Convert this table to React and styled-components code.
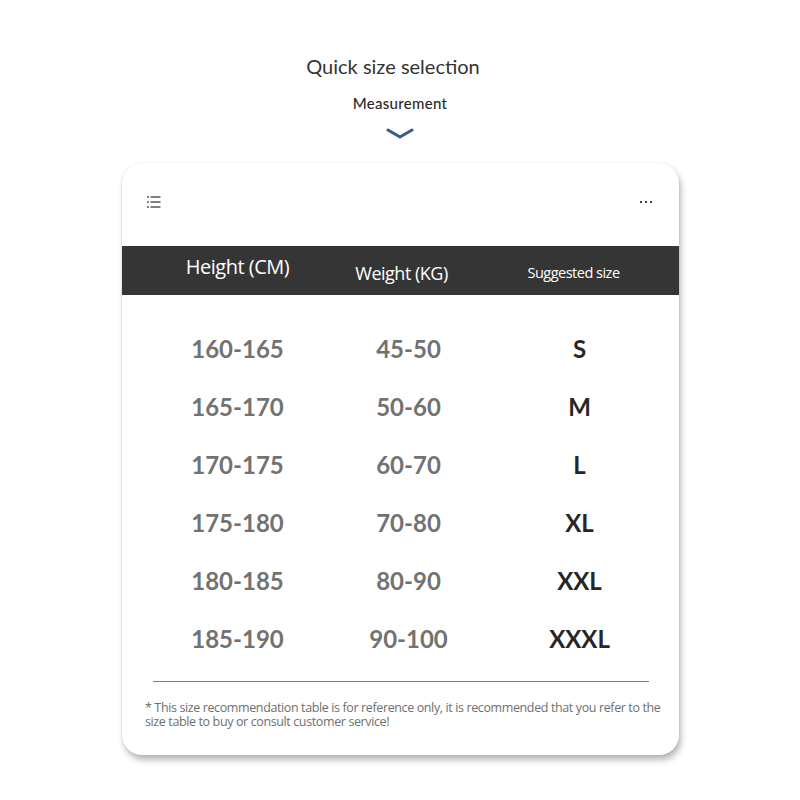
import React from "react";
import styled, { createGlobalStyle } from "styled-components";

const GlobalStyle = createGlobalStyle`
  html, body {
    margin: 0;
    padding: 0;
    background: #ffffff;
  }
  body {
    font-family: "Lato", "Noto Sans", sans-serif;
  }
`;

const Page = styled.div`
  width: 800px;
  height: 800px;
  display: flex;
  flex-direction: column;
  align-items: center;
  padding-top: 52px;
  box-sizing: border-box;
`;

const Title = styled.h1`
  margin: 0;
  font-family: "Lato", sans-serif;
  font-weight: 400;
  font-size: 20px;
  line-height: 28px;
  color: #333333;
  margin-left: -14px;
`;

const Subtitle = styled.div`
  margin-top: 13px;
  font-family: "Lato", sans-serif;
  font-weight: 500;
  font-size: 15px;
  line-height: 20px;
  color: #2a2a2a;
  letter-spacing: 0.3px;
`;

const Chevron = styled.svg`
  margin-top: 15px;
  display: block;
`;

const Card = styled.div`
  margin-top: 23px;
  margin-left: 1px;
  width: 557px;
  height: 592px;
  background: #ffffff;
  border-radius: 20px;
  box-shadow: 0 0 2px rgba(0, 0, 0, 0.12), 2px 5px 6px rgba(0, 0, 0, 0.28);
  overflow: hidden;
  display: flex;
  flex-direction: column;
`;

const Toolbar = styled.div`
  height: 83px;
  display: flex;
  align-items: center;
  justify-content: space-between;
  padding: 0 26px 6px 24px;
  box-sizing: border-box;
`;

const Grid = styled.div`
  display: grid;
  grid-template-columns: 171px 171px 171px;
  padding-left: 30px;
`;

const HeadBand = styled(Grid)`
  height: 49px;
  background: #353535;
  color: #ffffff;
  font-family: "Open Sans", "Noto Sans", sans-serif;
`;

const HeadCell = styled.div`
  display: flex;
  justify-content: center;
  align-items: center;
  font-size: ${(p) => p.$size}px;
  margin-top: ${(p) => p.$offset}px;
  margin-left: ${(p) => p.$shift || 0}px;
  font-weight: 500;
  letter-spacing: -0.5px;
  white-space: nowrap;
`;

const Rows = styled.div`
  padding-top: 24px;
`;

const Row = styled(Grid)`
  height: 58px;
  align-items: center;
`;

const Cell = styled.div`
  text-align: center;
  font-family: "Lato", sans-serif;
  font-weight: 700;
  font-size: 24px;
  color: ${(p) => (p.$dark ? "#262626" : "#727272")};
`;

const Divider = styled.hr`
  margin: 14px 30px 0 31px;
  border: none;
  border-top: 1px solid #7a7a7a;
`;

const Note = styled.p`
  margin: 19px 12px 0 23px;
  font-family: "Open Sans", "Noto Sans", sans-serif;
  font-size: 12.5px;
  line-height: 14px;
  letter-spacing: -0.38px;
  color: #6f6f6f;
`;

const ListIcon = () => (
  <svg width="16" height="14" viewBox="0 0 16 14">
    {[2, 7, 12].map((y) => (
      <g key={y} fill="#555">
        <rect x="1" y={y - 0.75} width="2" height="1.5" />
        <rect x="4.5" y={y - 0.75} width="10" height="1.5" />
      </g>
    ))}
  </svg>
);

const DotsIcon = () => (
  <svg width="14" height="4" viewBox="0 0 14 4">
    {[2, 7, 12].map((x) => (
      <rect key={x} x={x - 1} y="1" width="2" height="2" fill="#444" />
    ))}
  </svg>
);

const rows = [
  ["160-165", "45-50", "S"],
  ["165-170", "50-60", "M"],
  ["170-175", "60-70", "L"],
  ["175-180", "70-80", "XL"],
  ["180-185", "80-90", "XXL"],
  ["185-190", "90-100", "XXXL"],
];

export default function App() {
  return (
    <Page>
      <GlobalStyle />
      <Title>Quick size selection</Title>
      <Subtitle>Measurement</Subtitle>
      <Chevron width="28" height="12" viewBox="0 0 28 12">
        <path
          d="M2 2 L14 9 L26 2"
          fill="none"
          stroke="#3b5b8c"
          strokeWidth="3"
          strokeLinecap="round"
          strokeLinejoin="round"
        />
      </Chevron>
      <Card>
        <Toolbar>
          <ListIcon />
          <DotsIcon />
        </Toolbar>
        <HeadBand>
          <HeadCell $size={20} $offset={-8}>Height (CM)</HeadCell>
          <HeadCell $size={18} $offset={4} $shift={-14}>Weight (KG)</HeadCell>
          <HeadCell $size={14.5} $offset={4} $shift={-12}>Suggested size</HeadCell>
        </HeadBand>
        <Rows>
          {rows.map((r) => (
            <Row key={r[0]}>
              <Cell>{r[0]}</Cell>
              <Cell>{r[1]}</Cell>
              <Cell $dark>{r[2]}</Cell>
            </Row>
          ))}
        </Rows>
        <Divider />
        <Note>
          * This size recommendation table is for reference only, it is recommended that you refer to the
          size table to buy or consult customer service!
        </Note>
      </Card>
    </Page>
  );
}
